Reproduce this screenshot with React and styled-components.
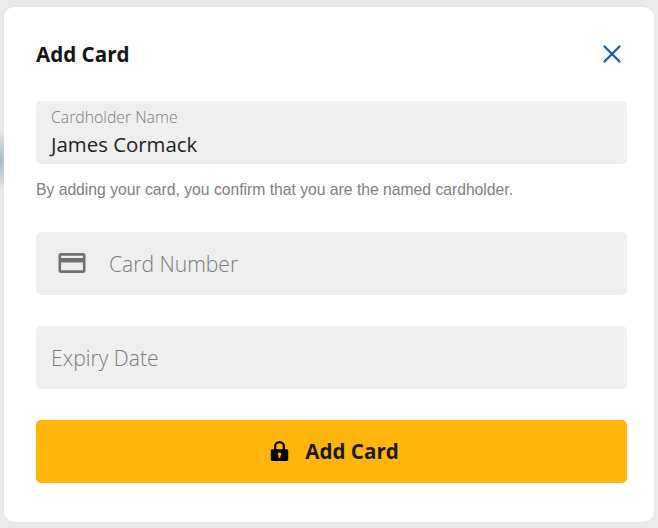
import React from "react";
import styled, { createGlobalStyle } from "styled-components";

const Global = createGlobalStyle`
  html, body { margin: 0; padding: 0; }
  body {
    width: 658px; height: 528px; overflow: hidden;
    background: radial-gradient(ellipse 10px 32px at 0 160px, #a9b8c4 0, #c9d2d9 50%, rgba(233,233,233,0) 100%), #ebebeb;
    font-family: "Open Sans", sans-serif;
  }
`;

const Page = styled.div`
  width: 658px;
  height: 528px;
  box-sizing: border-box;
  padding: 7px 4px 6px 4px;
`;

const Modal = styled.form`
  box-sizing: border-box;
  height: 515px;
  background: #fff;
  border-radius: 10px;
  box-shadow: 0 0 3px rgba(0, 0, 0, 0.06);
  padding: 0 27px 0 32px;
  display: flex;
  flex-direction: column;
`;

const Header = styled.div`
  height: 94px;
  display: flex;
  align-items: center;
  justify-content: space-between;
  box-sizing: border-box;
`;

const Title = styled.h2`
  margin: 0;
  font-size: 20.6px;
  line-height: 27px;
  font-weight: 700;
  color: #151515;
`;

const Close = styled.button`
  border: 0;
  background: none;
  padding: 0;
  margin-right: 5px;
  width: 20px;
  height: 20px;
  display: flex;
  color: #1a5fb4;
`;

const Field = styled.div`
  box-sizing: border-box;
  height: 62.5px;
  background: #efefef;
  border-radius: 5px;
  padding: 0 15px;
  display: flex;
  align-items: center;
  color: #7b7b7b;
  font-size: 21.1px;
  font-weight: 300;
  margin-bottom: ${p => p.$gap}px;
  ${p => p.$stacked && "flex-direction: column; align-items: flex-start; justify-content: flex-start; padding-top: 6px;"}
  ${p => p.$icon && "padding-left: 22px;"}
`;

const FloatLabel = styled.span`
  font-size: 15.8px;
  line-height: 20px;
  font-weight: 300;
  color: #7d7d7d;
`;

const Value = styled.span`
  font-size: 20.4px;
  line-height: 30px;
  font-weight: 400;
  color: #222;
  margin-top: 2px;
`;

const CardIcon = styled.svg`
  width: 28px;
  height: 22px;
  margin-right: 23px;
  flex: none;
`;

const Notice = styled.p`
  margin: 0;
  height: 68.5px;
  padding-top: 16px;
  box-sizing: border-box;
  font-family: "Liberation Sans", Arial, sans-serif;
  font-size: 15.7px;
  line-height: 20px;
  color: #808080;
  white-space: nowrap;
`;

const Submit = styled.button`
  border: 0;
  height: 63px;
  border-radius: 5px;
  background: #ffb60a;
  color: #1a1a1a;
  font-family: "Open Sans", sans-serif;
  font-size: 20.6px;
  font-weight: 700;
  display: flex;
  align-items: center;
  justify-content: center;
  gap: 16px;
  padding: 0 0 1px 6px;
`;

export default function App() {
  return (
    <>
      <Global />
      <Page>
        <Modal onSubmit={e => e.preventDefault()}>
          <Header>
            <Title>Add Card</Title>
            <Close type="button" aria-label="Close">
              <svg viewBox="0 0 20 20" width="20" height="20" fill="none" stroke="currentColor" strokeWidth="2.4" strokeLinecap="round">
                <path d="M2.500 2.500 L17.500 17.500 M17.500 2.500 L2.500 17.500" />
              </svg>
            </Close>
          </Header>
          <Field $stacked $gap={0}>
            <FloatLabel>Cardholder Name</FloatLabel>
            <Value>James Cormack</Value>
          </Field>
          <Notice>By adding your card, you confirm that you are the named cardholder.</Notice>
          <Field $icon $gap={31.5}>
            <CardIcon viewBox="0 0 28 22">
              <path fill="#6f7275" fillRule="evenodd" d="M3 1h22a2.500 2.500 0 0 1 2.500 2.500v15A2.500 2.500 0 0 1 25 21H3a2.500 2.500 0 0 1-2.500-2.500v-15A2.500 2.500 0 0 1 3 1zm.1 2.700V6h21.800V3.700zm0 6.800v7.800h21.800v-7.800z" />
            </CardIcon>
            Card Number
          </Field>
          <Field $gap={31.5}>Expiry Date</Field>
          <Submit type="submit">
            <svg viewBox="0 0 20 24" width="19" height="22">
              <path fill="#000" fillRule="evenodd" d="M10 1a6 6 0 0 1 6 6v3h2a1.500 1.500 0 0 1 1.500 1.500v10A1.500 1.500 0 0 1 18 23H2a1.500 1.500 0 0 1-1.500-1.500v-10A1.500 1.500 0 0 1 2 10h2V7a6 6 0 0 1 6-6zm0 2.500A3.500 3.500 0 0 0 6.500 7v3h7V7A3.500 3.500 0 0 0 10 3.500zM10 13.500a2 2 0 0 0-1 3.700V19.500h2v-2.300a2 2 0 0 0-1-3.700z" />
            </svg>
            Add Card
          </Submit>
        </Modal>
      </Page>
    </>
  );
}
